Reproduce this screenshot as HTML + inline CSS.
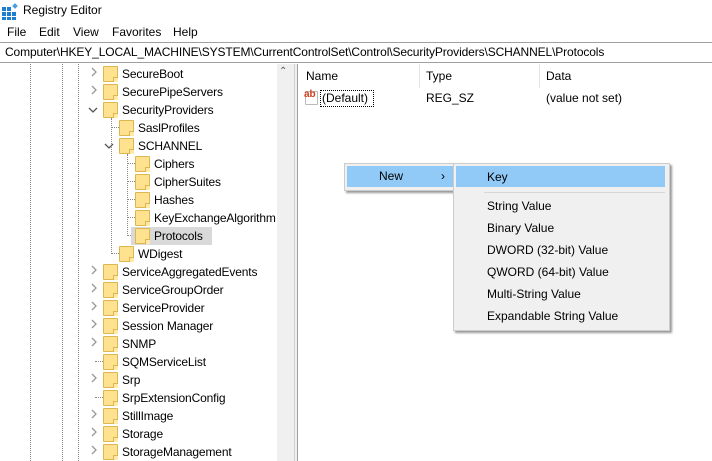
<!DOCTYPE html>
<html><head><style>
*{margin:0;padding:0;box-sizing:border-box}
body{width:712px;height:461px;overflow:hidden;background:#fff;font-family:"Liberation Sans",sans-serif;font-size:12px;color:#000;position:relative}
.a{position:absolute;white-space:nowrap}
.f{position:absolute;width:15px;height:16px;background:#ffe290;border:1px solid #dcb64f;border-radius:1px}
.f:after{content:"";position:absolute;right:-1px;bottom:-1px;width:4px;height:4px;border-left:1px solid #dcb64f;border-top:1px solid #dcb64f;background:#ffe8a8}
.c{position:absolute;color:#999;font-size:11px}
.dv{position:absolute;border-left:1px dotted #888;width:0}
.dh{position:absolute;border-top:1px dotted #888;height:0;width:8px}
.mi{position:absolute;left:487px}
.t{letter-spacing:-0.15px}
</style></head><body>
<svg class="a" style="left:2px;top:3px" width="17" height="17" viewBox="0 0 17 17">
<g fill="#1e7fd0"><rect x="0" y="4" width="4" height="4"/><rect x="5" y="4" width="4" height="4"/><rect x="0" y="9" width="4" height="4"/><rect x="5" y="9" width="4" height="4"/><rect x="10" y="9" width="4" height="4"/><rect x="0" y="14" width="4" height="3"/><rect x="5" y="14" width="4" height="3"/><rect x="10" y="14" width="4" height="3"/></g>
<rect x="11" y="1" width="4" height="4" fill="#4aa0e0" transform="rotate(45 13 3)"/></svg>
<div class="a" style="left:23px;top:3px;font-size:12px">Registry Editor</div>
<div class="a" style="left:7px;top:25px">File</div>
<div class="a" style="left:39px;top:25px">Edit</div>
<div class="a" style="left:73px;top:25px">View</div>
<div class="a" style="left:112px;top:25px">Favorites</div>
<div class="a" style="left:173px;top:25px">Help</div>
<div class="a" style="left:0;top:42px;width:712px;height:21px;border:1px solid #a0a0a0;border-left:none;border-right:none"></div>
<div class="a" style="left:5px;top:45px;letter-spacing:-0.12px">Computer\HKEY_LOCAL_MACHINE\SYSTEM\CurrentControlSet\Control\SecurityProviders\SCHANNEL\Protocols</div>
<div class="dv" style="left:30px;top:64px;height:397px"></div>
<div class="dv" style="left:62px;top:64px;height:397px"></div>
<div class="dv" style="left:78px;top:64px;height:397px"></div>
<div class="dv" style="left:111px;top:118px;height:136px"></div>
<div class="dv" style="left:127px;top:154px;height:82px"></div>
<div class="dh" style="left:111px;top:127px"></div>
<div class="dh" style="left:111px;top:253px"></div>
<div class="dh" style="left:127px;top:163px"></div><div class="dh" style="left:127px;top:181px"></div><div class="dh" style="left:127px;top:199px"></div><div class="dh" style="left:127px;top:217px"></div><div class="dh" style="left:127px;top:235px"></div>
<div class="dh" style="left:95px;top:361px"></div><div class="dh" style="left:95px;top:397px"></div>
<div class="a" style="left:131px;top:227px;width:81px;height:18px;background:#d9d9d9"></div>
<div id="tree"></div>
<div class="a" style="left:277px;top:64px;width:17px;height:397px;background:#f0f0f0"></div>
<div class="a" style="left:279px;top:66px;color:#606060;font-size:10px">&#8963;</div>
<div class="a" style="left:294px;top:64px;width:4px;height:397px;background:#f0f0f0;border-left:1px solid #d0d0d0;border-right:1px solid #a0a0a0"></div>
<div class="a" style="left:419px;top:64px;width:1px;height:24px;background:#e5e5e5"></div>
<div class="a" style="left:539px;top:64px;width:1px;height:24px;background:#e5e5e5"></div>
<div class="a" style="left:306px;top:69px">Name</div>
<div class="a" style="left:426px;top:69px">Type</div>
<div class="a" style="left:546px;top:69px">Data</div>
<div class="a" style="left:305px;top:91px;width:13px;height:14px;border:1px solid #bbb;border-radius:1px;background:#fff"></div>
<div class="a" style="left:304px;top:89px;color:#d04020;font-size:10px;font-weight:bold">ab</div>
<div class="a" style="left:320px;top:90px;width:54px;height:17px;border:1px dotted #000"></div>
<div class="a" style="left:322px;top:91px">(Default)</div>
<div class="a" style="left:426px;top:91px">REG_SZ</div>
<div class="a" style="left:546px;top:91px">(value not set)</div>
<div class="a" style="left:344px;top:163px;width:112px;height:28px;background:#f0f0f0;border:1px solid #ccc;box-shadow:2px 2px 2px #999"></div>
<div class="a" style="left:347px;top:166px;width:106px;height:21px;background:#91c9f7"></div>
<div class="a" style="left:379px;top:169px">New</div>
<div class="a" style="left:441px;top:169px">›</div>
<div class="a" style="left:453px;top:163px;width:217px;height:168px;background:#f0f0f0;border:1px solid #ccc;box-shadow:2px 2px 2px #999"></div>
<div class="a" style="left:456px;top:166px;width:209px;height:21px;background:#91c9f7"></div>
<div class="a" style="left:484px;top:192px;width:181px;height:1px;background:#d7d7d7"></div>
<div class="mi" style="top:170px">Key</div>
<div class="mi" style="top:199px">String Value</div>
<div class="mi" style="top:221px">Binary Value</div>
<div class="mi" style="top:243px">DWORD (32-bit) Value</div>
<div class="mi" style="top:265px">QWORD (64-bit) Value</div>
<div class="mi" style="top:287px">Multi-String Value</div>
<div class="mi" style="top:309px">Expandable String Value</div>
<script>
var rows=[[2,'SecureBoot','>'],[2,'SecurePipeServers','>'],[2,'SecurityProviders','v'],[3,'SaslProfiles',''],[3,'SCHANNEL','v'],[4,'Ciphers',''],[4,'CipherSuites',''],[4,'Hashes',''],[4,'KeyExchangeAlgorithm',''],[4,'Protocols',''],[3,'WDigest',''],[2,'ServiceAggregatedEvents','>'],[2,'ServiceGroupOrder','>'],[2,'ServiceProvider','>'],[2,'Session Manager','>'],[2,'SNMP','>'],[2,'SQMServiceList',''],[2,'Srp','>'],[2,'SrpExtensionConfig',''],[2,'StillImage','>'],[2,'Storage','>'],[2,'StorageManagement','>']];
var h='';rows.forEach(function(r,i){var y=65+i*18,o=(r[0]-2)*16;
if(r[2]=='>')h+='<div class="c" style="left:'+(90+o)+'px;top:'+(y+2)+'px"><svg width="8" height="10"><path d="M2 1l4 4-4 4" stroke="#999" fill="none" stroke-width="1.3"/></svg></div>';
if(r[2]=='v')h+='<div class="c" style="left:'+(88+o)+'px;top:'+(y+4)+'px"><svg width="10" height="8"><path d="M1 2l4 4 4-4" stroke="#555" fill="none" stroke-width="1.3"/></svg></div>';
h+='<div class="f" style="left:'+(103+o)+'px;top:'+(y+1)+'px"></div><div class="a t" style="left:'+(122+o)+'px;top:'+(y+2)+'px;'+(r[1]=='KeyExchangeAlgorithm'?'width:122px;overflow:hidden':'')+'">'+r[1]+'</div>';});
document.getElementById('tree').innerHTML=h;
</script>
</body></html>
